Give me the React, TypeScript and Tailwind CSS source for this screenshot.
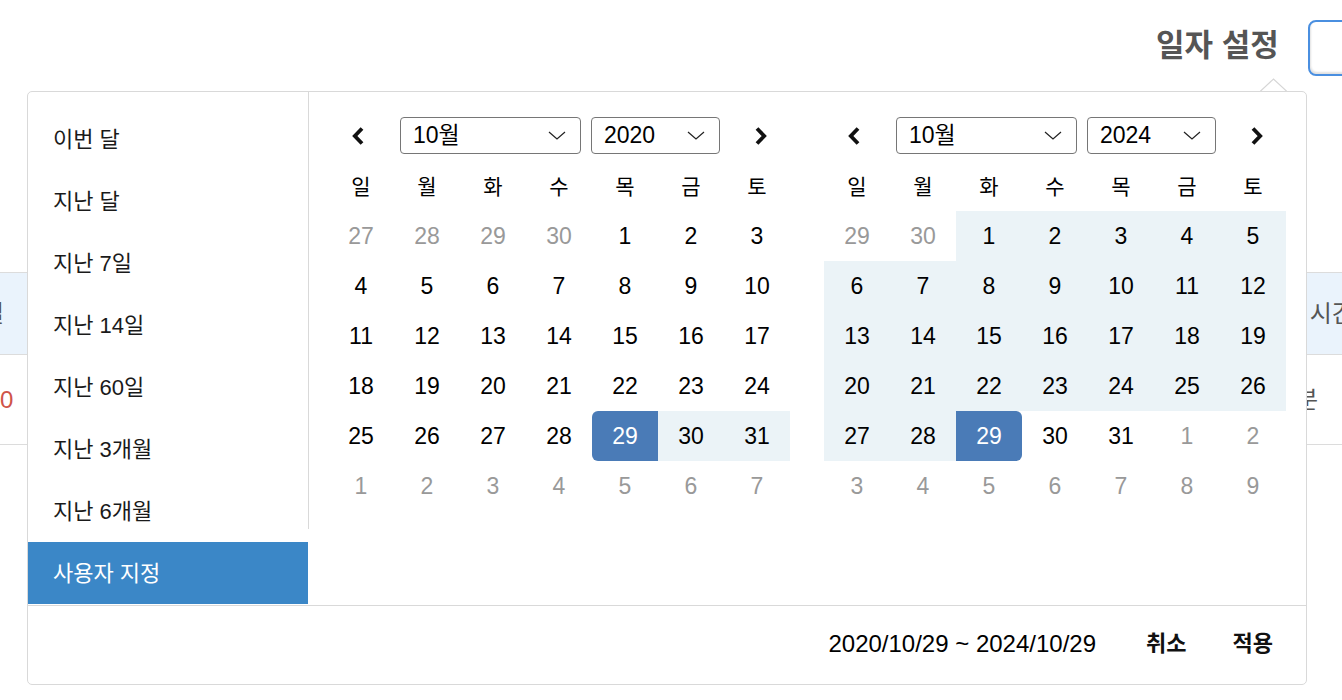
import React from "react";

type Cell = { d: number; m?: boolean; r?: boolean; sel?: "l" | "r" };

const range = (a: number, b: number, opts: Partial<Cell> = {}): Cell[] => {
  const out: Cell[] = [];
  for (let i = a; i <= b; i++) out.push({ d: i, ...opts });
  return out;
};

const leftRows: Cell[][] = [
  [...range(27, 30, { m: true }), ...range(1, 3)],
  range(4, 10),
  range(11, 17),
  range(18, 24),
  [...range(25, 28), { d: 29, sel: "l" }, { d: 30, r: true }, { d: 31, r: true }],
  range(1, 7, { m: true }),
];

const rightRows: Cell[][] = [
  [...range(29, 30, { m: true }), ...range(1, 5, { r: true })],
  range(6, 12, { r: true }),
  range(13, 19, { r: true }),
  range(20, 26, { r: true }),
  [{ d: 27, r: true }, { d: 28, r: true }, { d: 29, sel: "r" }, { d: 30 }, { d: 31 }, ...range(1, 2, { m: true })],
  range(3, 9, { m: true }),
];

const KO = "font-['Liberation_Sans','Noto_Sans_CJK_KR',sans-serif]";

function Arrow({ dir }: { dir: "l" | "r" }) {
  return (
    <svg width="14" height="20" viewBox="0 0 14 20" fill="none">
      {dir === "l" ? (
        <polyline points="11,2.5 3.8,10 11,17.5" stroke="#111" strokeWidth="3.8" strokeLinecap="butt" strokeLinejoin="miter" />
      ) : (
        <polyline points="3,2.5 10.2,10 3,17.5" stroke="#111" strokeWidth="3.8" strokeLinecap="butt" strokeLinejoin="miter" />
      )}
    </svg>
  );
}

function Select({ label, w }: { label: string; w: string }) {
  return (
    <div className={`${w} h-[37px] shrink-0 border border-[#767676] rounded-[4px] flex items-center justify-between pl-[12px] pr-[14px] bg-white`}>
      <span className={`${KO} text-[23px] leading-none text-black`}>{label}</span>
      <svg width="18" height="9" viewBox="0 0 18 9" fill="none">
        <polyline points="1,1 9,8 17,1" stroke="#222" strokeWidth="1.2" />
      </svg>
    </div>
  );
}

function Calendar({ month, year, rows }: { month: string; year: string; rows: Cell[][] }) {
  const dow = ["일", "월", "화", "수", "목", "금", "토"];
  return (
    <div className="w-[462px] shrink-0 flex flex-col">
      <div className="h-[37px] flex items-center mt-[25px]">
        <div className="w-[60px] flex justify-center">
          <Arrow dir="l" />
        </div>
        <div className="ml-[12px] flex gap-[10px]">
          <Select label={month} w="w-[181px]" />
          <Select label={year} w="w-[129px]" />
        </div>
        <div className="ml-[12px] w-[58px] flex justify-center">
          <Arrow dir="r" />
        </div>
      </div>
      <div className="mt-[7px] h-[50px] grid grid-cols-7">
        {dow.map((d) => (
          <div key={d} className={`flex items-center justify-center ${KO} text-[21px] leading-none text-black`}>
            {d}
          </div>
        ))}
      </div>
      {rows.map((row, i) => (
        <div key={i} className="h-[50px] grid grid-cols-7">
          {row.map((c, j) => {
            let cls = "text-black";
            if (c.m) cls = "text-[#999]";
            let bg = "";
            if (c.r) bg = "bg-[#ebf3f7]";
            if (c.sel === "l") bg = "bg-[#4a7bb7] rounded-l-[6px]";
            if (c.sel === "r") bg = "bg-[#4a7bb7] rounded-r-[6px]";
            if (c.sel) cls = "text-white";
            return (
              <div
                key={j}
                className={`flex items-center justify-center font-['Liberation_Sans',sans-serif] text-[23px] leading-none ${cls} ${bg}`}
              >
                {c.d}
              </div>
            );
          })}
        </div>
      ))}
    </div>
  );
}

export default function App() {
  const presets = ["이번 달", "지난 달", "지난 7일", "지난 14일", "지난 60일", "지난 3개월", "지난 6개월"];
  return (
    <div className="relative w-[1342px] h-[700px] overflow-hidden bg-white">
      {/* Header */}
      <div className="flex items-center pl-[1156px] pt-[20px] h-[76px]">
        <span className={`${KO} text-[31px] font-bold text-[#555] leading-none mb-[6px] whitespace-nowrap shrink-0`}>일자 설정</span>
        <div className="ml-[29px] w-[220px] h-[56px] shrink-0 border-2 border-[#4a8fe0] rounded-[8px] shadow-[inset_1px_-2px_2px_rgba(0,0,0,0.12)] bg-white" />
      </div>

      {/* Background table */}
      <div className="mt-[196px] border-t border-[#dcdcdc]">
        <div className="h-[81px] bg-[#eaf3fc] flex items-center justify-between">
          <span className={`${KO} text-[24px] text-[#555] leading-none -ml-[18px]`}>일</span>
          <span className={`${KO} text-[24px] text-[#555] leading-none mr-[-12px] whitespace-nowrap`}>시간</span>
        </div>
        <div className="h-[91px] border-t border-b border-[#dcdcdc] flex items-center justify-between">
          <span className="font-['Liberation_Sans',sans-serif] text-[24px] text-[#cf5449] leading-none">0</span>
          <span className={`${KO} text-[24px] text-[#555] leading-none mr-[24px]`}>분</span>
        </div>
      </div>

      {/* Popover arrow */}
      <svg className="absolute left-[1260px] top-[78px]" width="27" height="15" viewBox="0 0 27 15">
        <polygon points="0,14 13.5,1 27,14" fill="white" />
        <polyline points="0,13.5 13.5,1 27,13.5" fill="none" stroke="#d6d6d6" strokeWidth="1.2" />
      </svg>

      {/* Popover */}
      <div className="absolute left-[27px] top-[91px] w-[1280px] h-[594px] border border-[#d9d9d9] rounded-[5px] bg-white flex flex-col">
        <div className="h-[513px] flex">
          <div className="flex">
            <div className="w-[280px] pt-[16px] flex flex-col">
              {presets.map((p) => (
                <div key={p} className={`h-[62px] flex items-center pl-[25px] pt-[2px] ${KO} text-[22px] leading-none text-[#1a1a1a]`}>
                  {p}
                </div>
              ))}
              <div className={`h-[62px] flex items-center pl-[25px] pt-[2px] ${KO} text-[22px] leading-none text-white bg-[#3b87c7]`}>
                사용자 지정
              </div>
            </div>
            <div className="w-px h-[437px] bg-[#d9d9d9]" />
          </div>
          <div className="flex pl-[19px] gap-[34px]">
            <Calendar month="10월" year="2020" rows={leftRows} />
            <Calendar month="10월" year="2024" rows={rightRows} />
          </div>
        </div>
        <div className="flex-1 border-t border-[#d9d9d9] flex items-center justify-end pr-[33px] pb-[2px]">
          <span className="font-['Liberation_Sans',sans-serif] text-[24px] leading-none text-black whitespace-nowrap">2020/10/29 ~ 2024/10/29</span>
          <span className={`ml-[50px] ${KO} text-[22px] font-bold leading-none text-[#111]`}>취소</span>
          <span className={`ml-[46px] ${KO} text-[22px] font-bold leading-none text-[#111]`}>적용</span>
        </div>
      </div>
    </div>
  );
}
